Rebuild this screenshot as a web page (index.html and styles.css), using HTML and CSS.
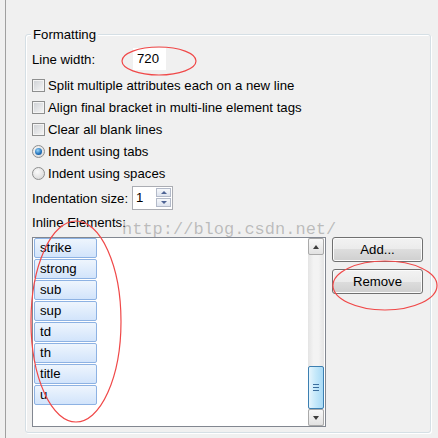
FILE: index.html
```html
<!DOCTYPE html>
<html>
<head>
<meta charset="utf-8">
<link rel="stylesheet" href="styles.css">
</head>
<body>
<div class="frame">
  <div class="group">
    <span class="legend">Formatting</span>
    <div class="row row-first">
      <span class="field-label">Line width:</span>
      <span class="text-input">720</span>
    </div>
    <div class="row"><span class="checkbox"></span><span>Split multiple attributes each on a new line</span></div>
    <div class="row"><span class="checkbox"></span><span>Align final bracket in multi-line element tags</span></div>
    <div class="row"><span class="checkbox"></span><span>Clear all blank lines</span></div>
    <div class="row"><span class="radio checked"></span><span>Indent using tabs</span></div>
    <div class="row"><span class="radio"></span><span>Indent using spaces</span></div>
    <div class="row spin-row">
      <span class="field-label">Indentation size:</span>
      <div class="spinner">
        <span class="spin-value">1</span>
        <div class="spin-btns">
          <span class="spin-btn"><span class="tri-up small"></span></span>
          <span class="spin-btn"><span class="tri-down small"></span></span>
        </div>
      </div>
    </div>
    <div class="row label-row">Inline Elements:</div>
    <div class="list-area">
      <div class="listbox">
        <div class="items">
          <div class="item">strike</div>
          <div class="item">strong</div>
          <div class="item">sub</div>
          <div class="item">sup</div>
          <div class="item">td</div>
          <div class="item">th</div>
          <div class="item">title</div>
          <div class="item">u</div>
        </div>
        <div class="scrollbar">
          <span class="sb-btn"><span class="tri-up"></span></span>
          <div class="sb-track">
            <div class="sb-thumb"><span class="grip"></span></div>
          </div>
          <span class="sb-btn"><span class="tri-down"></span></span>
        </div>
      </div>
      <div class="buttons">
        <button class="btn">Add...</button>
        <button class="btn">Remove</button>
      </div>
    </div>
  </div>
</div>
<div class="watermark">http://blog.csdn.net/</div>
<svg class="marks" width="438" height="438" viewBox="0 0 438 438">
  <ellipse cx="159" cy="61" rx="37" ry="14"/>
  <ellipse cx="385" cy="285.5" rx="52" ry="24.5"/>
  <ellipse cx="76" cy="321.5" rx="45" ry="100.5"/>
</svg>
</body>
</html>
```

FILE: styles.css
```css
html, body {
  margin: 0;
  height: 438px;
  overflow: hidden;
  background: #f0f0f0;
  font-family: "Liberation Sans", Arial, sans-serif;
  font-size: 13.2px;
  color: #000;
}

.frame {
  margin-left: 5px;
  border-left: 1px solid #a0a0a0;
  height: 438px;
  box-sizing: border-box;
  padding: 34px 7px 0 19px;
}

.group {
  position: relative;
  height: 399px;
  box-sizing: border-box;
  border: 1px solid #d5dfe5;
  border-radius: 3px;
  box-shadow: inset 1px 1px 0 #fff, 1px 1px 0 #fff;
  padding: 13px 7px 0 6px;
  display: flex;
  flex-direction: column;
}

.legend {
  position: absolute;
  left: 5px;
  top: -7px;
  padding: 0 2px;
  background: #f0f0f0;
  line-height: 14px;
}

.row {
  height: 22px;
  display: flex;
  align-items: center;
  white-space: nowrap;
}

.row-first { margin-bottom: 4px; }

.field-label { width: 100px; }

.text-input {
  width: 33px;
  height: 22px;
  margin-left: 1px;
  box-sizing: border-box;
  background: #fff;
  padding-left: 4px;
  line-height: 22px;
}

.checkbox {
  width: 13px;
  height: 13px;
  box-sizing: border-box;
  border: 1px solid #8e8f8f;
  background: linear-gradient(135deg, #cdd0d4, #f7f7f7);
  box-shadow: inset 0 0 0 1px #f4f4f4;
  margin-right: 3px;
  flex: none;
}

.radio {
  width: 13px;
  height: 13px;
  box-sizing: border-box;
  border-radius: 50%;
  border: 1px solid #8e8f8f;
  background: radial-gradient(circle at 40% 35%, #fbfbfb, #d2d2d2);
  margin-right: 3px;
  display: flex;
  align-items: center;
  justify-content: center;
  flex: none;
}

.radio.checked::after {
  content: "";
  width: 7px;
  height: 7px;
  border-radius: 50%;
  background: radial-gradient(circle at 40% 35%, #9ad6fa, #1f6fb8 60%, #0e4784);
}

.spin-row {
  height: 24px;
  margin-top: 2px;
}

.spinner {
  display: flex;
  width: 41px;
  height: 24px;
  box-sizing: border-box;
  border: 1px solid #abadb3;
  background: #fff;
}

.spin-value {
  flex: 1;
  padding-left: 3px;
  line-height: 22px;
}

.spin-btns {
  display: flex;
  flex-direction: column;
  width: 15px;
  padding: 1px 1px 0 0;
}

.spin-btn {
  height: 9px;
  box-sizing: border-box;
  border: 1px solid #b3bac9;
  background: linear-gradient(#f6f8fb, #dde3ee);
  display: flex;
  align-items: center;
  justify-content: center;
}

.spin-btn + .spin-btn { margin-top: 1px; }

.tri-up, .tri-down {
  width: 0;
  height: 0;
  border-left: 3.5px solid transparent;
  border-right: 3.5px solid transparent;
}
.tri-up { border-bottom: 4px solid #3d3d3d; }
.tri-down { border-top: 4px solid #3d3d3d; }
.tri-up.small { border-left-width: 3px; border-right-width: 3px; border-bottom: 3px solid #4d6394; }
.tri-down.small { border-left-width: 3px; border-right-width: 3px; border-top: 3px solid #4d6394; }

.label-row { margin-top: 1px; }

.list-area {
  display: flex;
  gap: 6px;
  margin-top: 4px;
  height: 190px;
}

.listbox {
  width: 294px;
  box-sizing: border-box;
  border: 1px solid #828790;
  background: #fff;
  display: flex;
}

.items {
  flex: 1;
  padding-left: 1px;
}

.item {
  width: 63px;
  height: 20px;
  margin-bottom: 1px;
  box-sizing: border-box;
  border: 1px solid #8db2e3;
  border-radius: 2px;
  background: linear-gradient(#eef5fd, #d2e4fb);
  padding-left: 5px;
  line-height: 18px;
}

.scrollbar {
  width: 16px;
  margin-right: 1px;
  display: flex;
  flex-direction: column;
  background: linear-gradient(to right, #e4e4e4, #f3f3f3 35%, #f3f3f3 65%, #e4e4e4);
}

.sb-btn {
  height: 17px;
  box-sizing: border-box;
  border: 1px solid #a9a9a9;
  border-radius: 2px;
  background: linear-gradient(#f8f8f8, #e2e2e2);
  display: flex;
  align-items: center;
  justify-content: center;
  flex: none;
}

.sb-track {
  flex: 1;
  display: flex;
  flex-direction: column;
  justify-content: flex-end;
}

.sb-thumb {
  height: 43px;
  box-sizing: border-box;
  border: 1px solid #3c7fb1;
  border-radius: 2px;
  background: linear-gradient(to right, #e6f5fd, #c6e9fa 45%, #a8daf6);
  display: flex;
  align-items: center;
  justify-content: center;
}

.grip {
  width: 6px;
  height: 7px;
  background: repeating-linear-gradient(#3a6e9e 0 1px, transparent 1px 3px);
}

.buttons {
  width: 91px;
  display: flex;
  flex-direction: column;
  gap: 7px;
}

.btn {
  height: 25px;
  box-sizing: border-box;
  border: 1px solid #707070;
  border-radius: 3px;
  background: linear-gradient(#f2f2f2 0, #ebebeb 50%, #dddddd 50%, #cfcfcf 100%);
  box-shadow: inset 0 0 0 1px #fbfbfb;
  font: inherit;
  color: #000;
  padding: 0;
}

.watermark {
  position: absolute;
  left: 122px;
  top: 220px;
  font-family: "Liberation Mono", "Courier New", monospace;
  font-size: 17px;
  line-height: 20px;
  color: rgba(100, 100, 100, 0.38);
  white-space: nowrap;
}

.marks {
  position: absolute;
  left: 0;
  top: 0;
  pointer-events: none;
}

.marks ellipse {
  fill: none;
  stroke: #f04848;
  stroke-width: 1.2;
}
```
